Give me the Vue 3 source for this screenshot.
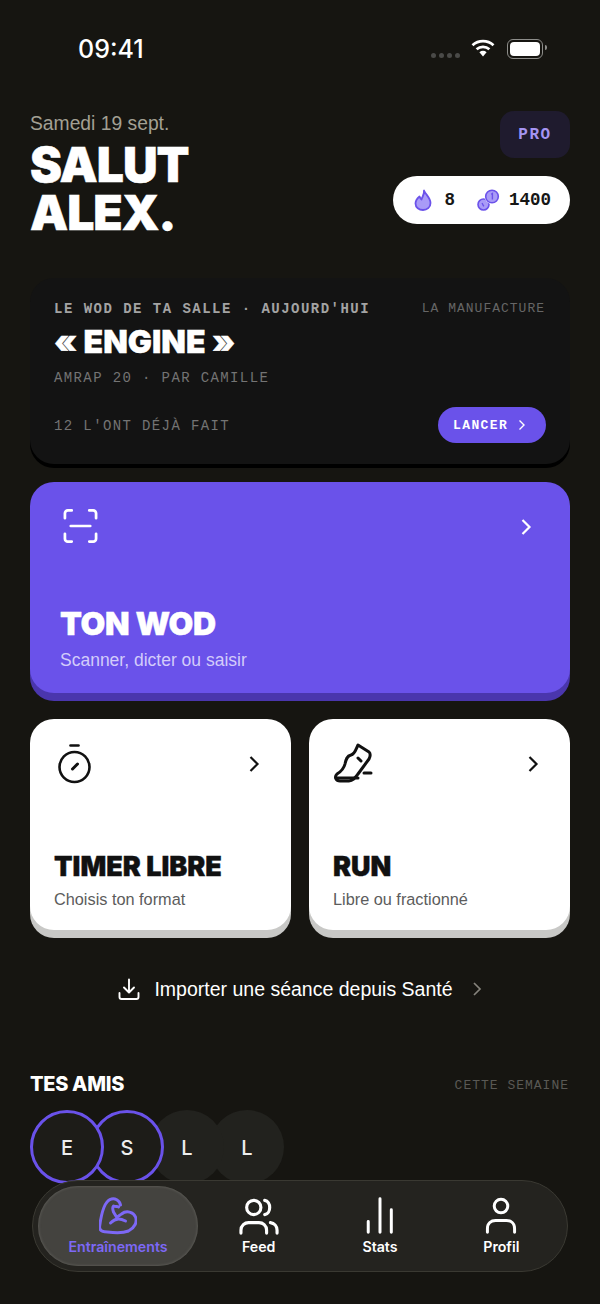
<template>
  <div class="screen">
    <div class="status-bar">
      <span class="clock">09:41</span>
      <div class="status-icons">
        <div class="signal"><i v-for="n in 4" :key="n"></i></div>
        <svg class="wifi" width="24" height="18" viewBox="0 0 24 18">
          <path d="M1.5 6.2C7.5 .8 16.5 .8 22.5 6.2" fill="none" stroke="#fff" stroke-width="2.8" />
          <path d="M5.6 10.2C9.3 7 14.7 7 18.4 10.2" fill="none" stroke="#fff" stroke-width="2.8" />
          <path d="M8.4 13.2C10.5 11.4 13.5 11.4 15.6 13.2L12 17.4Z" fill="#fff" />
        </svg>
        <div class="battery"><span></span></div>
      </div>
    </div>

    <header class="head">
      <div>
        <p class="date">Samedi 19 sept.</p>
        <h1>SALUT<br />ALEX.</h1>
      </div>
      <div class="head-right">
        <div class="pro">PRO</div>
        <div class="stats-pill">
          <svg class="flame" width="18" height="22" viewBox="0 0 18 22">
            <path d="M10 1.500C10.500 6 8 8 7.500 10.500 6.500 10 6 8.500 5.500 7.500 3 9.500 1.500 12 1.500 14.500 1.500 18.500 5 21 9 21s7.500-2.500 7.500-7C16.500 9 12 6 10 1.500Z" fill="#a99bf7" stroke="#6b52ea" stroke-width="1.800" stroke-linejoin="round" />
          </svg>
          <span class="count">8</span>
          <svg class="coins" width="23" height="22" viewBox="0 0 23 22">
            <circle cx="6.500" cy="15.500" r="5.500" fill="#a99bf7" stroke="#6b52ea" stroke-width="1.600" />
            <circle cx="15" cy="7.500" r="7.500" fill="#fff" />
            <circle cx="15" cy="7.500" r="6.300" fill="#a99bf7" stroke="#6b52ea" stroke-width="1.600" />
            <path d="M14.200 5.300l1.200-.8v6" fill="none" stroke="#6b52ea" stroke-width="1.400" />
            <path d="M5 14l1.800 3.400" fill="none" stroke="#6b52ea" stroke-width="1.300" />
          </svg>
          <span class="count">1400</span>
        </div>
      </div>
    </header>

    <section class="wod">
      <div class="wod-top">
        <span class="wod-label">LE WOD DE TA SALLE · AUJOURD'HUI</span>
        <span class="wod-gym">LA MANUFACTURE</span>
      </div>
      <h2>« ENGINE »</h2>
      <p class="wod-meta">AMRAP 20 · PAR CAMILLE</p>
      <div class="wod-bottom">
        <span class="wod-done">12 L'ONT DÉJÀ FAIT</span>
        <button class="launch">LANCER
          <svg width="8" height="12" viewBox="0 0 8 12"><path d="M1.500 1.500 6 6l-4.500 4.500" fill="none" stroke="#fff" stroke-width="1.400" /></svg>
        </button>
      </div>
    </section>

    <section class="card card-main">
      <div class="card-top">
        <svg class="scan" width="37" height="38" viewBox="0 0 38 38" fill="none" stroke="#fff" stroke-width="2.800" stroke-linecap="round">
          <path d="M3 11V6a3 3 0 0 1 3-3h4M28 3h4a3 3 0 0 1 3 3v5M35 27v5a3 3 0 0 1-3 3h-4M10 35H6a3 3 0 0 1-3-3v-5M9 19h20" />
        </svg>
        <svg class="chev" width="12" height="18" viewBox="0 0 12 18"><path d="M2.500 2 9.500 9l-7 7" fill="none" stroke="#fff" stroke-width="2.200" /></svg>
      </div>
      <h3>TON WOD</h3>
      <p>Scanner, dicter ou saisir</p>
    </section>

    <div class="duo">
      <section v-for="c in cards" :key="c.title" class="card card-white">
        <div class="card-top">
          <svg v-if="c.icon === 'timer'" width="40" height="44" viewBox="0 0 40 44" fill="none" stroke="#111" stroke-width="2.600" stroke-linecap="round">
            <path d="M16.500 3.500h8" />
            <circle cx="20.500" cy="25" r="15" />
            <path d="M18.500 27l5-5" stroke-width="3" />
          </svg>
          <svg v-else width="40" height="44" viewBox="8 4 40 44" fill="none" stroke="#111" stroke-width="3" stroke-linecap="round" stroke-linejoin="round">
            <path d="M33 7 44 14c2 2 1 5 0 7L33 36c-3 4-5 7-9 7h-9c-4 0-6-4-3-7 5-3 7-6 8-10 1-5 2-8 6-9 4-1 5-6 7-10Z" />
            <path d="M11 40h22M33 20l3 3M39 35h7" />
          </svg>
          <svg class="chev" width="12" height="18" viewBox="0 0 12 18"><path d="M2.500 2 9.500 9l-7 7" fill="none" stroke="#111" stroke-width="2.200" /></svg>
        </div>
        <h3>{{ c.title }}</h3>
        <p>{{ c.sub }}</p>
      </section>
    </div>

    <div class="import">
      <svg width="22" height="22" viewBox="0 0 22 22" fill="none" stroke="#fff" stroke-width="1.900" stroke-linecap="round" stroke-linejoin="round">
        <path d="M11 1.500v12.500M6 9.500l5 5 5-5M1.500 15v4a2 2 0 0 0 2 2h15a2 2 0 0 0 2-2v-4" />
      </svg>
      <span>Importer une séance depuis Santé</span>
      <svg width="10" height="16" viewBox="0 0 10 16"><path d="M2 2l6 6-6 6" fill="none" stroke="#85837c" stroke-width="1.700" /></svg>
    </div>

    <div class="friends-head">
      <h4>TES AMIS</h4>
      <span>CETTE SEMAINE</span>
    </div>
    <div class="avatars">
      <div v-for="(f, i) in friends" :key="i" :class="['avatar', { ring: f.active }]">{{ f.name }}</div>
    </div>

    <nav class="tabbar">
      <div v-for="t in tabs" :key="t.label" :class="['tab', { active: t.active }]">
        <svg v-if="t.icon === 'arm'" width="38" height="38" viewBox="8.500 6 38 38" fill="none" stroke="#7d68f6" stroke-width="3" stroke-linecap="round" stroke-linejoin="round">
          <path d="M30 14C29 9 24 7 21 8 15 9 11 21 9 36c0 4 4 5 8 5 8 1 16 1 21-1 6-3 9-9 7-14-2-5-9-7-14-3-2 1-3 3-5 3l-3-5c-1-3-1-5 0-6 2 1 4 0 5 1" />
          <path d="M20 32c3-3 6-4 8-4 3 0 5 1 7 2" />
        </svg>
        <svg v-else-if="t.icon === 'users'" width="40" height="38" viewBox="0 0 42 40" fill="none" stroke="#fff" stroke-width="3.300" stroke-linecap="round">
          <circle cx="15.500" cy="11" r="7.500" />
          <path d="M27 3.500c7 1 7 14 0 15M2 38v-3c0-5 4-8 8-8h11c4 0 8 3 8 8v3M33 27c4 .5 7 3.500 7 8v3" />
        </svg>
        <svg v-else-if="t.icon === 'bars'" width="38" height="38" viewBox="0 0 42 42" fill="none" stroke="#fff" stroke-width="3.300" stroke-linecap="round">
          <path d="M8 27v12M21 2v37M33.500 14v25" />
        </svg>
        <svg v-else width="38" height="38" viewBox="0 0 42 42" fill="none" stroke="#fff" stroke-width="3.300" stroke-linecap="round">
          <circle cx="21" cy="10" r="7.500" />
          <path d="M6 39v-4c0-6 4-9 9-9h12c5 0 9 3 9 9v4" />
        </svg>
        <span>{{ t.label }}</span>
      </div>
    </nav>
  </div>
</template>

<script setup>
const cards = [
  { title: 'TIMER LIBRE', sub: 'Choisis ton format', icon: 'timer' },
  { title: 'RUN', sub: 'Libre ou fractionné', icon: 'shoe' }
]

const friends = [
  { name: 'E', active: true },
  { name: 'S', active: true },
  { name: 'L', active: false },
  { name: 'L', active: false }
]

const tabs = [
  { label: 'Entraînements', icon: 'arm', active: true },
  { label: 'Feed', icon: 'users' },
  { label: 'Stats', icon: 'bars' },
  { label: 'Profil', icon: 'user' }
]
</script>

<style>
html, body { margin: 0; background: #161511; }
</style>

<style scoped>
.screen {
  position: relative;
  width: 600px;
  height: 1304px;
  overflow: hidden;
  box-sizing: border-box;
  padding: 0 30px;
  background: #161511;
  color: #fff;
  font-family: Inter, "Liberation Sans", sans-serif;
}
h1, h2, h3, h4, p { margin: 0; }

.status-bar {
  height: 96px;
  display: flex;
  justify-content: space-between;
  align-items: flex-start;
  padding: 35px 27px 0 48px;
  box-sizing: border-box;
}
.clock { font-size: 25px; font-weight: 500; line-height: 28px; }
.status-icons { display: flex; align-items: center; gap: 11px; margin-top: 4px; }
.signal { display: flex; gap: 3px; margin-top: 12px; }
.signal i { width: 5px; height: 5px; border-radius: 50%; background: #4a4a48; }
.wifi { margin-top: -3px; }
.battery {
  position: relative;
  width: 30px;
  height: 14px;
  margin-left: 1px;
  padding: 2px;
  border: 1.500px solid #8d8d8a;
  border-radius: 6px;
}
.battery span { display: block; width: 100%; height: 100%; background: #fff; border-radius: 4px; }
.battery::after {
  content: "";
  position: absolute;
  right: -5px;
  top: 5px;
  width: 2px;
  height: 5px;
  background: #8d8d8a;
  border-radius: 0 2px 2px 0;
}

.head { display: flex; justify-content: space-between; height: 135px; padding-top: 15px; }
.date { font: 19.300px/26px "Liberation Sans", sans-serif; color: #a3a094; margin-bottom: 4px; }
h1 {
  font-size: 48px;
  line-height: 48px;
  font-weight: 900;
  letter-spacing: -1px;
  -webkit-text-stroke: .5px #fff;
}
.head-right { display: flex; flex-direction: column; align-items: flex-end; gap: 18px; }
.pro {
  width: 70px;
  height: 47px;
  display: flex;
  align-items: center;
  justify-content: center;
  border-radius: 14px;
  background: #1f1b2e;
  color: #a594f2;
  font: 700 16px "Liberation Mono", monospace;
  letter-spacing: 1.500px;
}
.stats-pill {
  display: flex;
  align-items: center;
  height: 48px;
  padding: 0 19px 0 21px;
  border-radius: 24px;
  background: #fff;
  box-sizing: border-box;
}
.count { font: 700 17.500px "Liberation Mono", monospace; color: #161616; }
.flame { margin-right: 12px; }
.coins { margin: 0 9px 0 22px; }

.wod {
  height: 186px;
  margin-top: 32px;
  padding: 21px 24px 0;
  box-sizing: border-box;
  border-radius: 24px;
  background: #131313;
  box-shadow: 0 4px 0 #000;
  font-family: "Liberation Mono", monospace;
}
.wod-top { display: flex; justify-content: space-between; line-height: 20px; }
.wod-label { color: #a3a3a3; font-weight: 700; font-size: 14px; letter-spacing: 1.475px; }
.wod-gym { color: #666; font-size: 13px; letter-spacing: 1px; margin-right: 1px; }
h2 {
  font: 900 32px/40px Inter, sans-serif;
  margin-top: 3px;
  -webkit-text-stroke: .4px #fff;
}
.wod-meta { font-size: 14px; line-height: 20px; color: #747474; letter-spacing: 1.380px; margin-top: 6px; }
.wod-bottom { display: flex; justify-content: space-between; align-items: center; margin-top: 19px; }
.wod-done { font-size: 14px; color: #747474; letter-spacing: 1.380px; margin-top: 1px; }
.launch {
  display: flex;
  align-items: center;
  gap: 10px;
  width: 108px;
  height: 36px;
  padding: 0 0 0 15px;
  border: 0;
  border-radius: 18px;
  background: #6a52ea;
  color: #fff;
  font: 700 13px "Liberation Mono", monospace;
  letter-spacing: 1.400px;
}

.card {
  box-sizing: border-box;
  height: 211px;
  border-radius: 24px;
  display: flex;
  flex-direction: column;
}
.card-main {
  margin-top: 18px;
  padding: 25px 38px 21px 30px;
  background: #6a52ea;
  box-shadow: 0 8px 0 #4a36ad;
}
.card-top { display: flex; justify-content: space-between; align-items: flex-start; flex: 1; }
.card-main .scan { margin-left: 2px; }
.card-main .chev { margin-top: 11px; }
.card-white .chev { margin-top: 13px; }
.card h3 { font-size: 32px; line-height: 36px; font-weight: 900; letter-spacing: -.300px; -webkit-text-stroke: .4px currentColor; }
.card-main p { font: 17.500px/24px "Liberation Sans", sans-serif; color: #d3ccfa; margin-top: 6px; }

.duo { display: grid; grid-template-columns: 1fr 1fr; gap: 18px; margin-top: 26px; }
.card-white {
  padding: 23px 31px 20px 24px;
  background: #fff;
  box-shadow: 0 8px 0 #c8c8c6;
  color: #111;
}
.card-white h3 { font-size: 27px; line-height: 30px; letter-spacing: 0; }
.card-white p { font: 16.300px/22px "Liberation Sans", sans-serif; color: #5c5c5c; margin-top: 6px; }

.import {
  display: flex;
  align-items: center;
  justify-content: center;
  gap: 14px;
  height: 24px;
  margin-top: 47px;
  font: 19.500px "Liberation Sans", sans-serif;
}
.import svg:last-child { margin-left: 5px; }

.friends-head { display: flex; justify-content: space-between; align-items: center; margin-top: 71px; height: 24px; }
h4 { font-size: 20px; font-weight: 800; letter-spacing: -.300px; }
.friends-head span { font: 13px "Liberation Mono", monospace; color: #5a5955; letter-spacing: 1px; margin: 2px 1px 0 0; }
.avatars { display: flex; margin-top: 14px; }
.avatar {
  flex: none;
  width: 74px;
  height: 74px;
  margin-right: -14px;
  padding-top: 1px;
  display: flex;
  align-items: center;
  justify-content: center;
  box-sizing: border-box;
  border-radius: 50%;
  background: #22221e;
  font: 500 20px Inter, sans-serif;
  color: #eee;
}
.avatar.ring { border: 3px solid #6a52ea; background: #1d1c18; }
.avatar:nth-child(1) { z-index: 4; }
.avatar:nth-child(2) { z-index: 3; }
.avatar:nth-child(3) { z-index: 2; }

.tabbar {
  position: absolute;
  z-index: 5;
  left: 32px;
  top: 1180px;
  width: 536px;
  height: 92px;
  box-sizing: border-box;
  display: grid;
  grid-template-columns: 160px 1fr 1fr 1fr;
  align-items: center;
  padding: 5px;
  border: 1px solid #3a3932;
  border-radius: 46px;
  background: #24231f;
}
.tab {
  height: 80px;
  display: flex;
  flex-direction: column;
  align-items: center;
  justify-content: center;
  gap: 4px;
  border-radius: 40px;
  font-size: 14.200px;
  font-weight: 600;
}
.tab span { line-height: 16px; }
.tab.active {
  background: #44433f;
  color: #7d68f6;
  box-shadow: inset 0 0 3px #6b6a65;
}
</style>
